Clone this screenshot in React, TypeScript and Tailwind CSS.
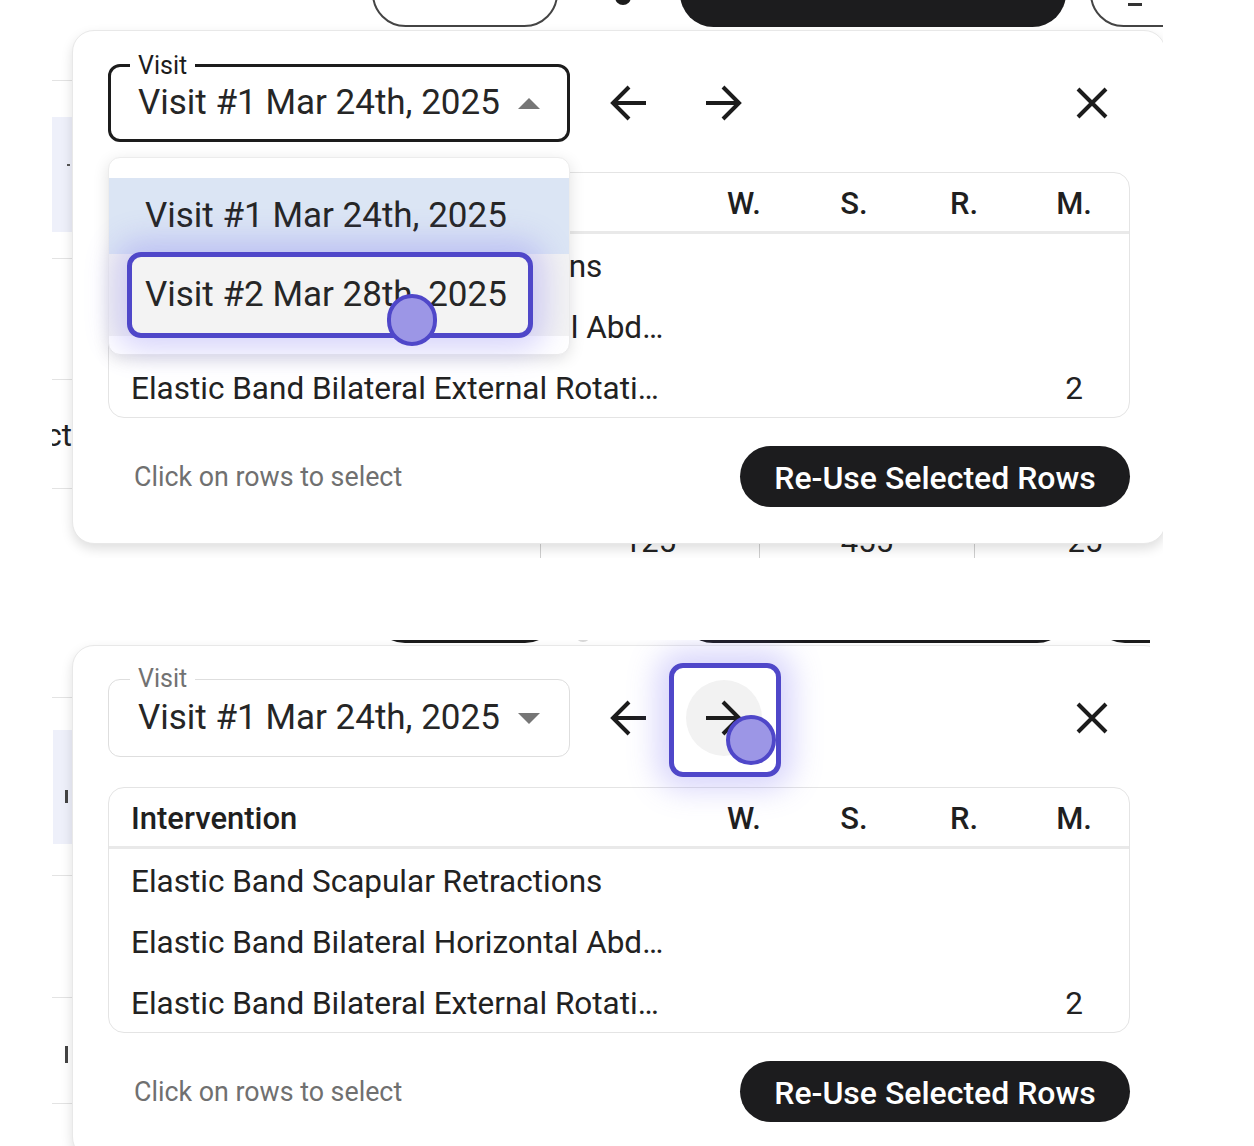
import React from 'react';

const rows = [
  { name: 'Elastic Band Scapular Retractions', w: '', s: '', r: '', m: '' },
  { name: 'Elastic Band Bilateral Horizontal Abd…', w: '', s: '', r: '', m: '' },
  { name: 'Elastic Band Bilateral External Rotati…', w: '', s: '', r: '', m: '2' },
];

const ArrowIcon = ({ dir }: { dir: 'left' | 'right' }) => (
  <svg width="36" height="36" viewBox="0 0 36 36" fill="none" stroke="#1c1c1c" strokeWidth="4">
    {dir === 'left' ? <path d="M36 18H4M19 2 3 18l16 16" /> : <path d="M0 18h32M17 2l16 16-16 16" />}
  </svg>
);

const CloseIcon = () => (
  <svg width="32" height="32" viewBox="0 0 32 32" fill="none" stroke="#1c1c1c" strokeWidth="4">
    <path d="M2 2l28 28M30 2 2 30" />
  </svg>
);

const Triangle = ({ up }: { up: boolean }) => (
  <svg width="22" height="11" viewBox="0 0 22 11" fill="#767676">
    {up ? <polygon points="0,11 11,0 22,11" /> : <polygon points="0,0 22,0 11,11" />}
  </svg>
);

const VisitSelect = ({ open }: { open: boolean }) => (
  <div
    className={`relative w-[462px] h-[78px] rounded-[12px] flex items-center justify-between ${
      open ? 'border-[3px] border-[#1c1c1c] pl-[27px] pr-[27px]' : 'border border-[#dedede] pl-[29px] pr-[29px]'
    }`}
  >
    <span
      className={`absolute top-[-2px] -translate-y-1/2 bg-white px-[8px] text-[25px] leading-none ${
        open ? 'left-[19px] text-[#1c1c1c]' : 'left-[21px] text-[#727272]'
      }`}
    >
      Visit
    </span>
    <span className="text-[35px] text-[#262626] whitespace-nowrap">Visit #1 Mar 24th, 2025</span>
    <Triangle up={open} />
  </div>
);

const InterventionTable = () => (
  <div className="w-full rounded-[16px] border border-[#e4e4e4] bg-white">
    <div className="flex h-[61px] pt-[4px] items-center border-b-[3px] border-[#e9e9e9] text-[31px] font-medium text-[#1f1f1f]">
      <div className="flex-1 pl-[22px]">Intervention</div>
      <div className="w-[110px] text-center">W.</div>
      <div className="w-[110px] text-center">S.</div>
      <div className="w-[110px] text-center">R.</div>
      <div className="w-[110px] text-center">M.</div>
    </div>
    {rows.map((row) => (
      <div key={row.name} className="flex h-[61px] pt-[4px] items-center text-[31.5px] text-[#222]">
        <div className="flex-1 pl-[22px] whitespace-nowrap">{row.name}</div>
        <div className="w-[110px] text-center">{row.w}</div>
        <div className="w-[110px] text-center">{row.s}</div>
        <div className="w-[110px] text-center">{row.r}</div>
        <div className="w-[110px] text-center">{row.m}</div>
      </div>
    ))}
  </div>
);

const ReuseCard = ({ variant }: { variant: 'dropdown' | 'next' }) => {
  const open = variant === 'dropdown';
  return (
    <div className="w-[1094px] bg-white rounded-[22px] border border-[#e8e8e8] shadow-[0_5px_12px_rgba(0,0,0,0.13)] px-[35px] pt-[33px] pb-[36px]">
      <div className="relative">
        <div className="flex items-center h-[78px]">
          <VisitSelect open={open} />
          <button className="ml-[20px] w-[76px] h-[76px] rounded-full flex items-center justify-center">
            <ArrowIcon dir="left" />
          </button>
          <button
            className={`ml-[20px] w-[76px] h-[76px] rounded-full flex items-center justify-center ${
              open ? '' : 'bg-[#f2f2f2]'
            }`}
          >
            <ArrowIcon dir="right" />
          </button>
          <div className="flex-1" />
          <button className="w-[76px] h-[76px] rounded-full flex items-center justify-center">
            <CloseIcon />
          </button>
        </div>

        <div className="mt-[30px]">
          <InterventionTable />
        </div>

        <div className="mt-[28px] flex items-center justify-between">
          <span className="pl-[26px] pt-[2px] text-[26.8px] text-[#707070]">Click on rows to select</span>
          <button className="w-[390px] h-[61px] pt-[2px] rounded-full bg-[#1c1c1e] text-white text-[32px] font-medium">
            Re-Use Selected Rows
          </button>
        </div>

        {open && (
          <>
            {/* open select menu */}
            <div className="absolute z-20 left-0 top-[93px] w-[462px] rounded-[12px] bg-white border border-[#ececec] shadow-[0_4px_16px_rgba(0,0,0,0.12)] pt-[20px] pb-[18px] overflow-hidden">
              <div className="h-[76px] flex items-center pl-[36px] bg-[#dbe5f4] text-[35px] text-[#262626] whitespace-nowrap">
                Visit #1 Mar 24th, 2025
              </div>
              <div className="h-[82px] flex items-center pl-[36px] bg-[#f3f3f3] text-[35px] text-[#262626] whitespace-nowrap">
                Visit #2 Mar 28th, 2025
              </div>
            </div>
            {/* click highlight */}
            <div className="absolute z-30 left-[19px] top-[188px] w-[406px] h-[86px] rounded-[14px] border-[5px] border-[#4f47c9] shadow-[0_0_30px_12px_rgba(110,102,240,0.28)]" />
            <div className="absolute z-40 left-[279px] top-[230px] w-[50px] h-[52px] rounded-full bg-[#9c96e6] border-[4px] border-[#4f47c9]" />
          </>
        )}

        {!open && (
          <>
            <div className="absolute z-30 left-[561px] top-[-16px] w-[112px] h-[114px] rounded-[14px] border-[5px] border-[#4f47c9] shadow-[0_0_30px_12px_rgba(110,102,240,0.28)]" />
            <div className="absolute z-40 left-[618px] top-[36px] w-[50px] h-[50px] rounded-full bg-[#9c96e6] border-[4px] border-[#4f47c9]" />
          </>
        )}
      </div>
    </div>
  );
};

const Line = () => <div className="h-px bg-[#e3e3e3]" />;

export default function App() {
  return (
    <div className="w-[1254px] h-[1146px] bg-white overflow-hidden font-['Roboto',sans-serif] flex flex-col">
      {/* first capture: visit menu open */}
      <div className="relative ml-[52px] w-[1111px] h-[558px] shrink-0 overflow-hidden bg-white flex flex-col">
        {/* page underneath the dialog */}
        <div className="flex items-end h-[27px] shrink-0">
          <div className="ml-[320px] w-[186px] h-[67px] shrink-0 rounded-full border-2 border-[#444]" />
          <div className="ml-[57px] mb-[22px] w-[16px] h-[16px] shrink-0 rounded-full bg-[#1c1c1c]" />
          <div className="ml-[49px] w-[386px] h-[67px] shrink-0 rounded-full bg-[#1c1c1e]" />
          <div className="ml-[24px] w-[150px] h-[67px] shrink-0 rounded-full border-2 border-[#444] pl-[36px] pt-[41px]">
            <div className="w-[14px] h-[3px] bg-[#333]" />
          </div>
        </div>
        <div className="flex flex-col w-[20px] h-[495px] shrink-0">
          <div className="h-[53px]" />
          <Line />
          <div className="h-[36px]" />
          <div className="h-[115px] bg-[#eef0fa] pl-[15px] pt-[47px]">
            <div className="w-[3px] h-[2px] bg-[#555]" />
          </div>
          <div className="h-[26px]" />
          <Line />
          <div className="h-[120px]" />
          <Line />
          <div className="h-[36px]" />
          <div className="h-[40px] flex justify-end items-center text-[31px] text-[#222] whitespace-nowrap">Select</div>
          <div className="h-[32px]" />
          <Line />
        </div>
        <div className="flex h-[40px] shrink-0 text-[31px] text-[#222] leading-[40px]">
          <div className="w-[489px] shrink-0 border-r border-[#cfcfcf]" />
          <div className="w-[219px] shrink-0 border-r border-[#cfcfcf] text-center">125</div>
          <div className="w-[215px] shrink-0 border-r border-[#cfcfcf] text-center">455</div>
          <div className="w-[220px] shrink-0 text-center">25</div>
        </div>

        <div className="absolute z-10 left-[20px] top-[30px]">
          <ReuseCard variant="dropdown" />
        </div>
      </div>

      {/* second capture: next visit arrow */}
      <div className="relative mt-[82px] ml-[52px] w-[1098px] h-[506px] shrink-0 overflow-hidden bg-white flex flex-col">
        <div className="flex items-end h-[3px] shrink-0">
          <div className="ml-[320px] w-[186px] h-[66px] shrink-0 rounded-full border-[3px] border-[#1c1c1c]" />
          <div className="ml-[17px] mb-[1px] w-[16px] h-[16px] shrink-0 rounded-full bg-[#d8d8d8]" />
          <div className="ml-[89px] w-[390px] h-[66px] shrink-0 rounded-full bg-[#1c1c1e]" />
          <div className="ml-[22px] w-[150px] h-[66px] shrink-0 rounded-full border-[3px] border-[#1c1c1c]" />
        </div>
        <div className="flex flex-col w-[20px] shrink-0">
          <div className="h-[54px]" />
          <Line />
          <div className="h-[32px]" />
          <div className="h-[114px] ml-[1px] bg-[#eef0fa] pl-[12px] pt-[60px]">
            <div className="w-[3px] h-[13px] bg-[#444]" />
          </div>
          <div className="h-[31px]" />
          <Line />
          <div className="h-[121px]" />
          <Line />
          <div className="h-[48px]" />
          <div className="h-[17px] pl-[13px]">
            <div className="w-[3px] h-full bg-[#444]" />
          </div>
          <div className="h-[40px]" />
          <Line />
        </div>

        <div className="absolute z-10 left-[20px] top-[5px]">
          <ReuseCard variant="next" />
        </div>
      </div>
    </div>
  );
}
